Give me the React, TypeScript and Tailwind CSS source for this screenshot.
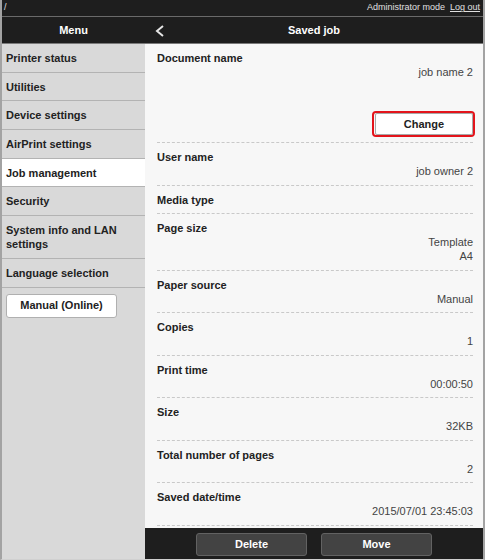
const menuItems = [
  { label: 'Printer status' },
  { label: 'Utilities' },
  { label: 'Device settings' },
  { label: 'AirPrint settings' },
  { label: 'Job management', active: true },
  { label: 'Security' },
  { label: 'System info and LAN settings' },
  { label: 'Language selection' },
]

const details: { label: string; values: string[] }[] = [
  { label: 'User name', values: ['job owner 2'] },
  { label: 'Media type', values: [] },
  { label: 'Page size', values: ['Template', 'A4'] },
  { label: 'Paper source', values: ['Manual'] },
  { label: 'Copies', values: ['1'] },
  { label: 'Print time', values: ['00:00:50'] },
  { label: 'Size', values: ['32KB'] },
  { label: 'Total number of pages', values: ['2'] },
  { label: 'Saved date/time', values: ['2015/07/01 23:45:03'] },
]

function DetailRow({ label, values }: { label: string; values: string[] }) {
  return (
    <div className="pt-[7px] pb-[6.5px] border-b border-dashed border-[#c9c9c9] leading-[14px]">
      <div className="font-bold text-[#222]">{label}</div>
      {values.map((v) => (
        <div key={v} className="text-right text-[#444]">
          {v}
        </div>
      ))}
    </div>
  )
}

export default function App() {
  return (
    <div
      className="w-[485px] h-[560px] flex flex-col border-x-2 border-b border-x-[#a3a3a3] border-b-[#d0d0d0] bg-[#1e1e1e] text-[11px] overflow-hidden"
      style={{ fontFamily: '"Liberation Sans", Arial, sans-serif' }}
    >
      {/* top strip */}
      <div className="h-[17px] shrink-0 flex items-center justify-between pl-[2px] pr-[3px] border-b border-[#6a6a6a] text-[9px] text-[#e0e0e0]">
        <span>/</span>
        <span className="flex gap-[5px]">
          <span>Administrator mode</span>
          <span className="underline">Log out</span>
        </span>
      </div>

      {/* title bar */}
      <div className="h-[27px] shrink-0 flex border-b border-[#7a7a7a] text-white font-bold">
        <div className="w-[143px] flex items-center justify-center">Menu</div>
        <div className="flex-1 relative flex items-center justify-center">
          <svg
            className="absolute left-[10px] top-[8px]"
            width="10"
            height="12"
            viewBox="0 0 10 12"
            fill="none"
          >
            <polyline points="8,1 2,6 8,11" stroke="#e6e6e6" strokeWidth="2" />
          </svg>
          Saved job
        </div>
      </div>

      <div className="flex-1 flex min-h-0">
        {/* sidebar */}
        <div className="w-[143px] shrink-0 bg-[#d9d9d9] text-[#222] font-bold">
          {menuItems.map((item) => (
            <div
              key={item.label}
              className={
                'px-[4px] pt-[7px] pb-[6.7px] leading-[14px] border-b border-[#b3b3b3] ' +
                (item.active ? 'bg-white' : '')
              }
            >
              {item.label}
            </div>
          ))}
          <div className="pt-[6px] pl-[4px]">
            <button className="w-[111px] h-[24px] bg-white border border-[#b0b0b0] rounded-[3px] font-bold text-[#222]">
              Manual (Online)
            </button>
          </div>
        </div>

        {/* content */}
        <div className="flex-1 flex flex-col min-w-0">
          <div className="flex-1 bg-[#f7f7f7] pl-[12px] pr-[10px] overflow-hidden">
            <div className="pt-[7px] pb-[5px] border-b border-dashed border-[#c9c9c9] leading-[14px]">
              <div className="font-bold text-[#222]">Document name</div>
              <div className="text-right text-[#444]">job name 2</div>
              <div className="flex justify-end mt-[32px] -mr-[2px]">
                <div className="w-[103px] h-[26px] border-2 border-[#e3141b] rounded-[4px] flex">
                  <button className="flex-1 ml-[1px] bg-white border border-[#a8a8a8] rounded-[2px] font-bold text-[#222]">
                    Change
                  </button>
                </div>
              </div>
            </div>
            {details.map((d) => (
              <DetailRow key={d.label} label={d.label} values={d.values} />
            ))}
          </div>
          <div className="h-[31px] shrink-0 bg-[#1e1e1e] flex items-center justify-center gap-[14px] pt-[1px]">
            <button className="w-[111px] h-[23px] bg-[#434343] border border-[#626262] rounded-[3px] text-white font-bold">
              Delete
            </button>
            <button className="w-[111px] h-[23px] bg-[#434343] border border-[#626262] rounded-[3px] text-white font-bold">
              Move
            </button>
          </div>
        </div>
      </div>
    </div>
  )
}
